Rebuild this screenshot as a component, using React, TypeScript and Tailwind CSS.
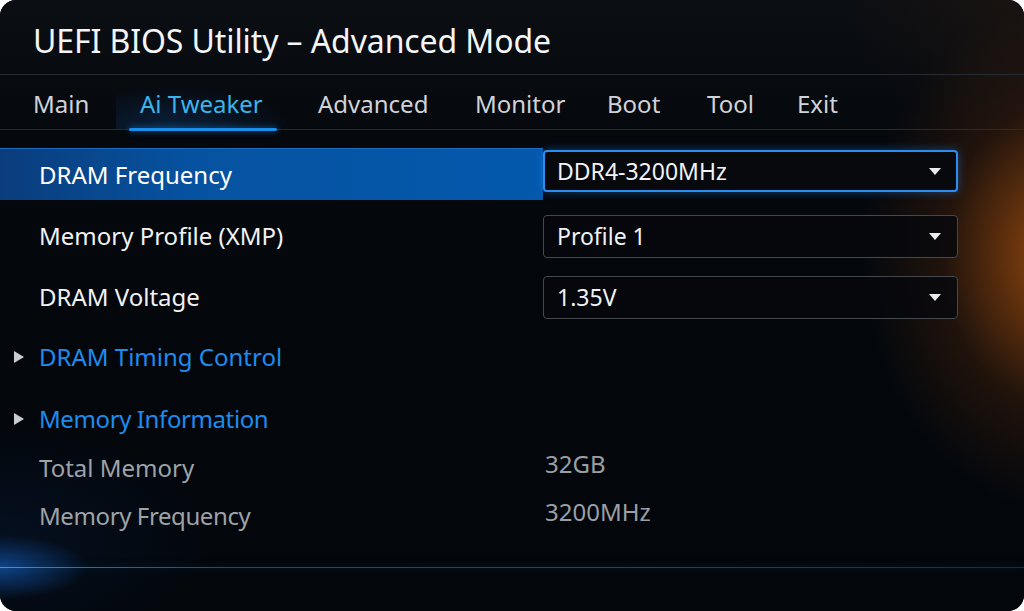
import React from 'react';

// --- small pieces ---
const Caret = () => (
  <svg width="14" height="9" viewBox="0 0 14 9" className="shrink-0">
    <path d="M1 1 L13 1 L7 8 Z" fill="#e9ecef" />
  </svg>
);

const SideArrow = () => (
  <svg width="12" height="14" viewBox="0 0 12 14" className="shrink-0">
    <path d="M1 1 L11 7 L1 13 Z" fill="#c9cdd3" />
  </svg>
);

const Select = ({ value, active }: { value: string; active?: boolean }) => (
  <div
    className={
      active
        ? 'flex items-center justify-between w-[415px] h-[42px] pl-[12px] pr-[14px] rounded-[4px] border-2 border-[#2a8ef0] bg-[#07090d] shadow-[0_0_10px_rgba(30,130,240,0.45)]'
        : 'flex items-center justify-between w-[415px] h-[43px] pl-[13px] pr-[15px] rounded-[4px] border border-[#45484d] bg-[#06080c]/80'
    }
  >
    <span className="text-[23px] leading-[30px] text-[#f1f3f5]">{value}</span>
    <Caret />
  </div>
);

const tabs = [
  { name: 'Main', w: 'w-[107px]' },
  { name: 'Ai Tweaker', w: 'w-[178px]', active: true },
  { name: 'Advanced', w: 'w-[157px]' },
  { name: 'Monitor', w: 'w-[132px]' },
  { name: 'Boot', w: 'w-[100px]' },
  { name: 'Tool', w: 'w-[90px]' },
  { name: 'Exit', w: 'w-[80px]' },
];

export default function App() {
  return (
    <div className="w-[1024px] h-[611px] bg-white font-['Noto_Sans',sans-serif]">
      <div className="relative w-[1024px] h-[611px] overflow-hidden rounded-[16px] bg-[#03070c]">
        {/* ===== background glows ===== */}
        <div className="absolute inset-0 pointer-events-none bg-[linear-gradient(180deg,#0b0e13_0%,#05080d_22%,#03070c_60%,#03070c_100%)]" />
        <div className="absolute inset-0 pointer-events-none bg-[radial-gradient(ellipse_270px_340px_at_104%_42%,rgba(220,104,15,0.7),rgba(120,55,10,0.25)_45%,transparent_75%)]" />
        <div className="absolute inset-0 pointer-events-none bg-[radial-gradient(ellipse_260px_200px_at_100%_0%,rgba(40,25,15,0.5),transparent_70%)]" />
        <div className="absolute inset-0 pointer-events-none bg-[radial-gradient(ellipse_110px_40px_at_0%_92.8%,rgba(25,120,240,0.55),transparent_80%)]" />
        <div className="absolute inset-0 pointer-events-none bg-[radial-gradient(ellipse_300px_160px_at_0%_88%,rgba(10,50,110,0.2),transparent_70%)]" />

        <div className="relative flex flex-col">
          {/* ===== title ===== */}
          <div className="h-[75px] pt-[21px] pl-[33px] border-b border-[#262a31]">
            <h1 className="text-[32px] leading-[40px] text-[#f4f5f7] tracking-[-0.1px]">
              UEFI BIOS Utility – Advanced Mode
            </h1>
          </div>

          {/* ===== tabs ===== */}
          <div className="relative h-[55px] pl-[33px] flex border-b border-[#262a31]">
            {tabs.map((t) => (
              <div key={t.name} className={`${t.w} relative pt-[13px]`}>
                {t.active && (
                  <>
                    <div className="absolute left-[-24px] right-[20px] top-[10px] bottom-0 bg-[radial-gradient(ellipse_at_30%_100%,rgba(30,120,220,0.22),transparent_70%)]" />
                    <div className="absolute left-[-11px] w-[148px] -bottom-[2px] h-[3px] rounded-full bg-[#1b8fec] shadow-[0_0_6px_rgba(27,143,236,0.7)]" />
                  </>
                )}
                <span
                  className={
                    t.active
                      ? 'relative text-[24px] leading-[32px] text-[#3bb4ec]'
                      : 'relative text-[24px] leading-[32px] text-[#d0d3d8]'
                  }
                >
                  {t.name}
                </span>
              </div>
            ))}
          </div>

          {/* ===== settings ===== */}
          <div className="mt-[18px] flex">
            <div className="w-[543px] h-[52px] flex items-center pl-[39px] bg-[linear-gradient(90deg,#0a3d7c_0%,#0652a0_35%,#0459ad_100%)] border-t border-[#1a6cc0]">
              <span className="text-[24px] leading-[32px] text-white">DRAM Frequency</span>
            </div>
            <div className="mt-[2px]">
              <Select value="DDR4-3200MHz" active />
            </div>
          </div>

          <div className="mt-[11px] h-[50px] flex items-center">
            <span className="w-[543px] pl-[39px] text-[24px] leading-[32px] text-[#f1f2f4]">Memory Profile (XMP)</span>
            <Select value="Profile 1" />
          </div>

          <div className="mt-[11px] h-[50px] flex items-center">
            <span className="w-[543px] pl-[39px] text-[24px] leading-[32px] text-[#f1f2f4]">DRAM Voltage</span>
            <Select value="1.35V" />
          </div>

          <div className="mt-[10px] h-[50px] flex items-center pl-[13px] gap-[14px]">
            <SideArrow />
            <span className="text-[24px] leading-[32px] text-[#1d8cf0]">DRAM Timing Control</span>
          </div>

          <div className="mt-[12px] h-[50px] flex items-center pl-[13px] gap-[14px]">
            <SideArrow />
            <span className="text-[24px] leading-[32px] text-[#1d8cf0] tracking-[-0.4px]">Memory Information</span>
          </div>

          <div className="h-[48px] flex items-center">
            <span className="w-[545px] pl-[39px] text-[24px] leading-[32px] text-[#9fa2a7]">Total Memory</span>
            <span className="pb-[8px] text-[24px] leading-[32px] text-[#9c9fa3]">32GB</span>
          </div>

          <div className="h-[48px] flex items-center">
            <span className="w-[545px] pl-[39px] text-[24px] leading-[32px] text-[#9fa2a7] tracking-[-0.4px]">Memory Frequency</span>
            <span className="pb-[8px] text-[24px] leading-[32px] text-[#9c9fa3]">3200MHz</span>
          </div>

          {/* ===== bottom divider ===== */}
          <div className="mt-[27px] h-px bg-[linear-gradient(90deg,#2a9bff_0%,#1a6fd0_8%,#3a4150_22%,#3a3f47_60%,#24282f_100%)] shadow-[0_0_8px_rgba(30,140,255,0.35)]" />
        </div>
      </div>
    </div>
  );
}
